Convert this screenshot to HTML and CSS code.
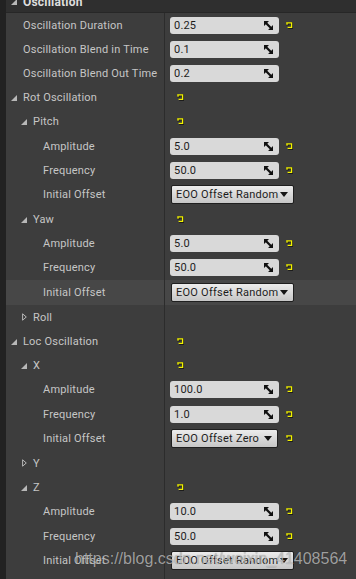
FILE: index.html
```html
<!DOCTYPE html>
<html>
<head>
<meta charset="utf-8">
<link rel="stylesheet" href="styles.css">
</head>
<body>
<svg class="defs" width="0" height="0">
  <symbol id="spin" viewBox="0 0 9 9"><path d="M0 0H5L0 5Z M9 9H4L9 4Z" fill="#111"/><path d="M1.5 1.5L7.5 7.5" stroke="#111" stroke-width="2.2"/></symbol>
  <symbol id="rst" viewBox="0 0 8 8"><path d="M2 1.2V3.8 M1.2 1.8H6.6V6.4H2.6" fill="none" stroke="#1c1c1c" stroke-width="2.4" transform="translate(0.6 0.6)"/><path d="M2 1.2V3.8 M1.2 1.8H6.6V6.4H2.6" fill="none" stroke="#f2f200" stroke-width="1.3"/></symbol>
  <symbol id="open" viewBox="0 0 6 6"><path d="M0 6H6V0Z" fill="#b8b8b8"/></symbol>
  <symbol id="closed" viewBox="0 0 5 8"><path d="M0.6 0.8L4.3 4L0.6 7.2Z" fill="none" stroke="#b8b8b8" stroke-width="1"/></symbol>
</svg>
<div class="panel">
  <div class="header"><span class="tw"><svg width="6" height="6"><use href="#open"/></svg></span><span class="htext">Oscillation</span></div>

  <div class="row"><div class="name l0">Oscillation Duration</div><div class="val"><div class="num"><span>0.25</span><svg class="spin" width="9" height="9"><use href="#spin"/></svg></div><svg class="rst" width="8" height="8"><use href="#rst"/></svg></div></div>
  <div class="row"><div class="name l0">Oscillation Blend in Time</div><div class="val"><div class="num"><span>0.1</span><svg class="spin" width="9" height="9"><use href="#spin"/></svg></div></div></div>
  <div class="row"><div class="name l0">Oscillation Blend Out Time</div><div class="val"><div class="num"><span>0.2</span><svg class="spin" width="9" height="9"><use href="#spin"/></svg></div></div></div>

  <div class="row"><div class="name l0"><span class="tw"><svg width="6" height="6"><use href="#open"/></svg></span>Rot Oscillation</div><div class="val"><svg class="rst solo" width="8" height="8"><use href="#rst"/></svg></div></div>
  <div class="row"><div class="name l1"><span class="tw"><svg width="6" height="6"><use href="#open"/></svg></span>Pitch</div><div class="val"><svg class="rst solo" width="8" height="8"><use href="#rst"/></svg></div></div>
  <div class="row"><div class="name l2">Amplitude</div><div class="val"><div class="num"><span>5.0</span><svg class="spin" width="9" height="9"><use href="#spin"/></svg></div><svg class="rst" width="8" height="8"><use href="#rst"/></svg></div></div>
  <div class="row"><div class="name l2">Frequency</div><div class="val"><div class="num"><span>50.0</span><svg class="spin" width="9" height="9"><use href="#spin"/></svg></div><svg class="rst" width="8" height="8"><use href="#rst"/></svg></div></div>
  <div class="row tall"><div class="name l2">Initial Offset</div><div class="val"><div class="dd wide"><span>EOO Offset Random</span><span class="arrow"></span></div></div></div>

  <div class="row"><div class="name l1"><span class="tw"><svg width="6" height="6"><use href="#open"/></svg></span>Yaw</div><div class="val"><svg class="rst solo" width="8" height="8"><use href="#rst"/></svg></div></div>
  <div class="row"><div class="name l2">Amplitude</div><div class="val"><div class="num"><span>5.0</span><svg class="spin" width="9" height="9"><use href="#spin"/></svg></div><svg class="rst" width="8" height="8"><use href="#rst"/></svg></div></div>
  <div class="row"><div class="name l2">Frequency</div><div class="val"><div class="num"><span>50.0</span><svg class="spin" width="9" height="9"><use href="#spin"/></svg></div><svg class="rst" width="8" height="8"><use href="#rst"/></svg></div></div>
  <div class="row tall hl"><div class="name l2">Initial Offset</div><div class="val"><div class="dd wide"><span>EOO Offset Random</span><span class="arrow"></span></div></div></div>

  <div class="row"><div class="name l1"><span class="tw cl"><svg width="5" height="8"><use href="#closed"/></svg></span>Roll</div><div class="val"></div></div>

  <div class="row"><div class="name l0"><span class="tw"><svg width="6" height="6"><use href="#open"/></svg></span>Loc Oscillation</div><div class="val"><svg class="rst solo" width="8" height="8"><use href="#rst"/></svg></div></div>
  <div class="row"><div class="name l1"><span class="tw"><svg width="6" height="6"><use href="#open"/></svg></span>X</div><div class="val"><svg class="rst solo" width="8" height="8"><use href="#rst"/></svg></div></div>
  <div class="row"><div class="name l2">Amplitude</div><div class="val"><div class="num"><span>100.0</span><svg class="spin" width="9" height="9"><use href="#spin"/></svg></div><svg class="rst" width="8" height="8"><use href="#rst"/></svg></div></div>
  <div class="row"><div class="name l2">Frequency</div><div class="val"><div class="num"><span>1.0</span><svg class="spin" width="9" height="9"><use href="#spin"/></svg></div><svg class="rst" width="8" height="8"><use href="#rst"/></svg></div></div>
  <div class="row tall"><div class="name l2">Initial Offset</div><div class="val"><div class="dd narrow"><span>EOO Offset Zero</span><span class="arrow"></span></div><svg class="rst dd-rst" width="8" height="8"><use href="#rst"/></svg></div></div>

  <div class="row"><div class="name l1"><span class="tw cl"><svg width="5" height="8"><use href="#closed"/></svg></span>Y</div><div class="val"></div></div>
  <div class="row"><div class="name l1"><span class="tw"><svg width="6" height="6"><use href="#open"/></svg></span>Z</div><div class="val"><svg class="rst solo" width="8" height="8"><use href="#rst"/></svg></div></div>
  <div class="row"><div class="name l2">Amplitude</div><div class="val"><div class="num"><span>10.0</span><svg class="spin" width="9" height="9"><use href="#spin"/></svg></div><svg class="rst" width="8" height="8"><use href="#rst"/></svg></div></div>
  <div class="row"><div class="name l2">Frequency</div><div class="val"><div class="num"><span>50.0</span><svg class="spin" width="9" height="9"><use href="#spin"/></svg></div><svg class="rst" width="8" height="8"><use href="#rst"/></svg></div></div>
  <div class="row tall"><div class="name l2">Initial Offset</div><div class="val"><div class="dd wide"><span>EOO Offset Random</span><span class="arrow"></span></div></div></div>
  <div class="filler"><div class="name"></div></div>
</div>
<div class="wm">https://blog.csdn.net/weixin_41408564</div>
</body>
</html>
```

FILE: styles.css
```css
html, body {
  margin: 0;
  padding: 0;
  background: #3d3d3d;
  overflow: hidden;
}
body {
  width: 356px;
  height: 579px;
  font-family: Roboto, "Liberation Sans", sans-serif;
  font-size: 11px;
  color: #c6c6c6;
}
.defs { position: absolute; width: 0; height: 0; }
.panel {
  display: flex;
  flex-direction: column;
  height: 579px;
  border-left: 6px solid #222222;
  box-sizing: border-box;
  background: #3d3d3d;
}
.header {
  height: 12px;
  background: #2f2f2f;
  border-bottom: 1px solid #272727;
  display: flex;
  align-items: flex-start;
  padding-left: 17px;
  overflow: hidden;
}
.header .tw { margin-top: -1px; }
.htext {
  font-weight: bold;
  font-size: 12px;
  line-height: 12px;
  margin-top: -4px;
  color: #dedede;
  letter-spacing: 0.2px;
}
.row {
  display: flex;
  height: 24.2px;
  flex: none;
}
.row.tall { height: 25.2px; }
.row.hl { background: #474747; }
.name {
  width: 159px;
  flex: none;
  box-sizing: border-box;
  border-right: 1px solid #2c2c2c;
  display: flex;
  align-items: center;
  white-space: nowrap;
  letter-spacing: 0.2px;
}
.l0 { padding-left: 17px; }
.l1 { padding-left: 27px; }
.l2 { padding-left: 37px; }
.tw {
  width: 13px;
  margin-left: -13px;
  display: flex;
  align-items: center;
  padding-left: 1px;
  box-sizing: border-box;
}
.tw svg { display: block; }
.name .tw svg { margin-top: 1px; }
.tw.cl { padding-left: 2px; }
.name .tw.cl svg { margin-top: 0; }
.val {
  display: flex;
  align-items: center;
  padding-left: 5px;
  flex: 1;
}
.num {
  width: 109px;
  height: 17px;
  box-sizing: border-box;
  background: #d9d9d9;
  border-radius: 3px;
  display: flex;
  align-items: center;
  justify-content: space-between;
  padding: 0 6px 0 4px;
  color: #1c1c1c;
  letter-spacing: 0.2px;
}
.spin { display: block; }
.rst { display: block; margin-left: 6px; margin-top: -1px; }
.rst.solo { margin-left: 6px; }
.rst.dd-rst { margin-left: 7px; }
.dd {
  margin-left: 1px;
  height: 19px;
  box-sizing: border-box;
  border: 1px solid #1f1f1f;
  border-radius: 2px;
  background: linear-gradient(#ececec, #c6c6c6);
  display: flex;
  align-items: center;
  justify-content: space-between;
  padding: 0 5px 0 4px;
  color: #1c1c1c;
  white-space: nowrap;
  letter-spacing: 0.25px;
}
.dd.wide { width: 123px; }
.dd.narrow { width: 107px; }
.arrow {
  width: 0;
  height: 0;
  border-left: 4px solid transparent;
  border-right: 4px solid transparent;
  border-top: 5px solid #151515;
}
.filler {
  flex: 1;
  display: flex;
}
.wm {
  position: absolute;
  left: 75px;
  top: 551px;
  font-family: "Liberation Sans", Arial, sans-serif;
  font-size: 16px;
  line-height: 16px;
  color: rgba(205, 205, 205, 0.72);
  text-shadow: 0 0 1px rgba(0, 0, 0, 0.35);
  white-space: nowrap;
}
```
